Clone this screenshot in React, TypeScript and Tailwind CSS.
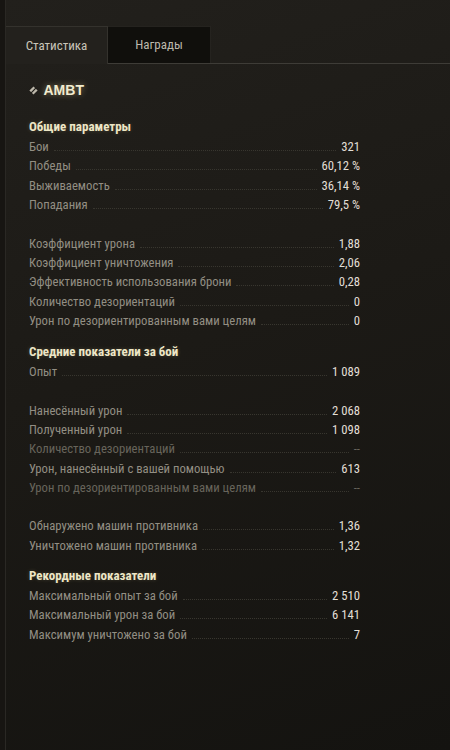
import React from "react";

type Row = { label: string; value: string; dim?: boolean } | null;

const section1: Row[] = [
  { label: "Бои", value: "321" },
  { label: "Победы", value: "60,12 %" },
  { label: "Выживаемость", value: "36,14 %" },
  { label: "Попадания", value: "79,5 %" },
  null,
  { label: "Коэффициент урона", value: "1,88" },
  { label: "Коэффициент уничтожения", value: "2,06" },
  { label: "Эффективность использования брони", value: "0,28" },
  { label: "Количество дезориентаций", value: "0" },
  { label: "Урон по дезориентированным вами целям", value: "0" },
];

const section2: Row[] = [
  { label: "Опыт", value: "1 089" },
  null,
  { label: "Нанесённый урон", value: "2 068" },
  { label: "Полученный урон", value: "1 098" },
  { label: "Количество дезориентаций", value: "--", dim: true },
  { label: "Урон, нанесённый с вашей помощью", value: "613" },
  { label: "Урон по дезориентированным вами целям", value: "--", dim: true },
  null,
  { label: "Обнаружено машин противника", value: "1,36" },
  { label: "Уничтожено машин противника", value: "1,32" },
];

const section3: Row[] = [
  { label: "Максимальный опыт за бой", value: "2 510" },
  { label: "Максимальный урон за бой", value: "6 141" },
  { label: "Максимум уничтожено за бой", value: "7" },
];

function Rows({ rows }: { rows: Row[] }) {
  return (
    <div className="flex flex-col">
      {rows.map((r, i) =>
        r === null ? (
          <div key={i} className="h-[19.3px]" />
        ) : (
          <div key={i} className="flex h-[19.3px] items-center">
            <span className={r.dim ? "text-[#67645b]" : "text-[#928e83]"}>{r.label}</span>
            <span className="mx-[5px] mt-[8px] h-0 flex-1 border-b border-dotted border-[#38362f]" />
            <span className={r.dim ? "text-[#67645b]" : "text-[#e2dfd6]"}>{r.value}</span>
          </div>
        )
      )}
    </div>
  );
}

function Header({ children, className = "" }: { children: React.ReactNode; className?: string }) {
  return (
    <div
      className={`flex h-[21px] items-center text-[13px] font-bold text-[#ede6c6] [text-shadow:0_0_4px_rgba(255,235,170,0.2)] ${className}`}
    >
      {children}
    </div>
  );
}

export default function App() {
  return (
    <div
      className="relative h-[750px] w-[450px] overflow-hidden bg-[linear-gradient(160deg,#22201c_0%,#1c1a16_45%,#141310_100%)] text-[12.7px]"
      style={{ fontFamily: '"Roboto Condensed", "Liberation Sans", sans-serif' }}
    >
      <div className="flex h-full">
        <div className="w-[6px] border-r border-[#2a2824] bg-[#171512]" />
        <div className="flex flex-1 flex-col">
          <div className="h-[26px]" />
          <div className="flex h-[38px]">
            <div className="flex w-[102px] items-center justify-center border-t border-r border-[#34322d] bg-[#23211d] text-[13px] text-[#c9c5b9]">
              Статистика
            </div>
            <div className="flex flex-1 flex-col">
              <div className="flex flex-1">
                <div className="flex w-[103px] items-center justify-center border-t border-r border-[#25231f] bg-[#100f0c] text-[13px] text-[#bdb9ad]">
                  Награды
                </div>
              </div>
              <div className="h-px bg-[#3e3c37]" />
            </div>
          </div>
          <div className="flex w-[354px] flex-col pl-[23px]">
            <div className="mt-[16px] flex h-[20px] items-center gap-[6px]">
              <svg width="9" height="9" viewBox="0 0 9 9" className="ml-[-0.5px]">
                <rect x="1.6" y="1.6" width="5.8" height="5.8" transform="rotate(45 4.5 4.5)" fill="#bdb8ab" />
                <line x1="2.2" y1="6.8" x2="6.8" y2="2.2" stroke="#1d1b17" strokeWidth="1.2" />
              </svg>
              <span
                className="text-[14px] font-bold text-[#f1ebcf] [text-shadow:0_0_6px_rgba(255,235,170,0.45)]"
                style={{ fontFamily: '"Liberation Sans", Arial, sans-serif' }}
              >
                AMBT
              </span>
            </div>
            <Header className="mt-[16px]">Общие параметры</Header>
            <Rows rows={section1} />
            <Header className="mt-[11px]">Средние показатели за бой</Header>
            <Rows rows={section2} />
            <Header className="mt-[10px]">Рекордные показатели</Header>
            <Rows rows={section3} />
          </div>
        </div>
      </div>
    </div>
  );
}
